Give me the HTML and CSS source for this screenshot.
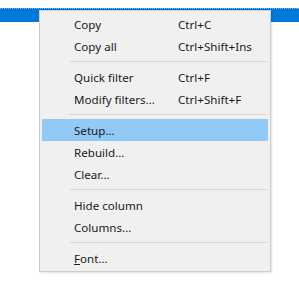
FILE: index.html
```
<!DOCTYPE html>
<html lang="en">
<head>
    <meta charset="UTF-8">
    <meta name="viewport" content="width=device-width, initial-scale=1.0">
    <title>Context menu</title>
    <link rel="stylesheet" href="styles.css">
</head>
<body>
    <div class="row-selected"></div>

    <div class="menu">
        <div class="menu-item"><span>Copy</span><span>Ctrl+C</span></div>
        <div class="menu-item"><span>Copy all</span><span>Ctrl+Shift+Ins</span></div>
        <div class="separator"></div>
        <div class="menu-item"><span>Quick filter</span><span>Ctrl+F</span></div>
        <div class="menu-item"><span>Modify filters...</span><span>Ctrl+Shift+F</span></div>
        <div class="separator"></div>
        <div class="menu-item active"><span>Setup...</span><span></span></div>
        <div class="menu-item"><span>Rebuild...</span><span></span></div>
        <div class="menu-item"><span>Clear...</span><span></span></div>
        <div class="separator"></div>
        <div class="menu-item"><span>Hide column</span><span></span></div>
        <div class="menu-item"><span>Columns...</span><span></span></div>
        <div class="separator"></div>
        <div class="menu-item"><span><u>F</u>ont...</span><span></span></div>
    </div>
</body>
</html>
```

FILE: styles.css
```
* {
    box-sizing: border-box;
    margin: 0;
    padding: 0;
}

body {
    font-family: "Noto Sans", "Open Sans", sans-serif;
    background: #ffffff;
    width: 299px;
    height: 290px;
    position: relative;
    overflow: hidden;
}

.row-selected {
    margin-top: 8px;
    height: 14px;
    background: #0078d7;
    border-top: 1px dotted #7fb4e4;
}

.menu {
    position: absolute;
    left: 39px;
    top: 10px;
    width: 232px;
    background: #f0f0f0;
    border: 1px solid #cccccc;
    padding: 2px;
    box-shadow: 1px 1px 2px rgba(0,0,0,0.12);
}

.menu-item {
    display: grid;
    grid-template-columns: 104px 1fr;
    align-items: center;
    height: 22px;
    padding-left: 32px;
    padding-top: 1px;
    font-size: 11.6px;
    color: #1a1a1a;
    white-space: nowrap;
}

.menu-item.active {
    background: #91c9f7;
}

.separator {
    height: 9px;
    padding-top: 4px;
    margin-left: 28px;
    margin-right: 1px;
}

.separator::before {
    content: "";
    display: block;
    height: 1px;
    background: #d7d7d7;
}
```
